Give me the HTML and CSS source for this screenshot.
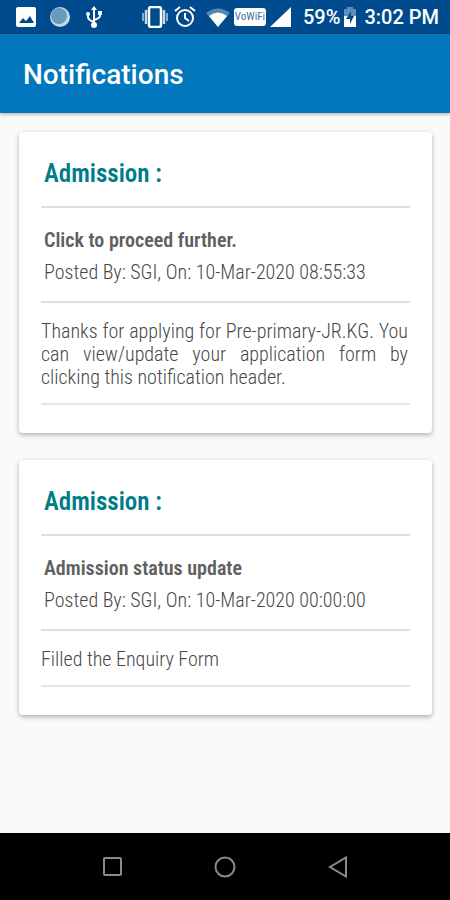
FILE: index.html
```html
<!DOCTYPE html>
<html lang="en">
<head>
<meta charset="utf-8">
<meta name="viewport" content="width=device-width, initial-scale=1">
<title>Notifications</title>
<link rel="stylesheet" href="styles.css">
</head>
<body>
<div class="status-bar">
  <div class="status-group status-left">
    <svg width="20" height="20" viewBox="0 0 20 20"><rect width="20" height="20" rx="2" fill="#fff"/><path d="M3 16l4-5 3 3 4-5 4 7z" fill="#004b8d"/></svg>
    <svg width="20" height="20" viewBox="0 0 20 20"><circle cx="10" cy="10" r="10" fill="#c5d8e8"/><circle cx="9" cy="9" r="8" fill="#6b9abf"/></svg>
    <svg class="usb" width="16" height="22" viewBox="0 0 16 22" fill="none" stroke="#fff" stroke-width="2"><path d="M8 3v16M2 8v3q0 3 6 5M14 7v3q0 2-6 4"/><path d="M8 0l3 4H5z" fill="#fff" stroke="none"/><circle cx="8" cy="19" r="3" fill="#fff" stroke="none"/><circle cx="2" cy="8" r="2" fill="#fff" stroke="none"/><path d="M12 5h4v4h-4z" fill="#fff" stroke="none"/></svg>
  </div>
  <div class="status-group status-right">
    <svg class="vibrate" width="26" height="22" viewBox="0 0 26 22" fill="none"><rect x="7" y="1" width="12" height="20" rx="2" stroke="#fff" stroke-width="2.5"/><path d="M4 4v14M22 4v14" stroke="#c5d8e8" stroke-width="2.5"/><path d="M1 7v8M25 7v8" stroke="#89abc9" stroke-width="2"/></svg>
    <svg class="alarm" width="22" height="22" viewBox="0 0 22 22" fill="none" stroke="#fff" stroke-width="2"><circle cx="11" cy="12" r="8"/><path d="M11 7v5l4 3M1 5l5-4M21 5l-5-4"/></svg>
    <svg width="24" height="19" viewBox="0 0 24 19"><path d="M0 5Q12-4 24 5L12 19z" fill="#5587b3"/><path d="M3 8q9-7 18 0l-9 11z" fill="#fff"/></svg>
    <span class="vowifi">VoWiFi</span>
    <svg width="21" height="20" viewBox="0 0 21 20"><path d="M21 0v20H0z" fill="#fff"/></svg>
    <span class="status-text battery-level">59%</span>
    <svg width="12" height="20" viewBox="0 0 12 20"><path d="M3 2V0h6v2h3v8H0V2z" fill="#5f8db7"/><path d="M0 9h12v11H0z" fill="#fff"/><path d="M7 4L2 12h4v5l4-8H7z" fill="#004b8d"/></svg>
    <span class="status-text clock">3:02 PM</span>
  </div>
</div>
<header class="app-bar"><h1>Notifications</h1></header>
<main class="list">
  <article class="card">
    <h2>Admission :</h2>
    <div class="summary">
      <h3>Click to proceed further.</h3>
      <p>Posted By: SGI, On: 10-Mar-2020 08:55:33</p>
    </div>
    <p class="message">Thanks for applying for Pre-primary-JR.KG. You can view/update your application form by clicking this notification header.</p>
  </article>
  <article class="card">
    <h2>Admission :</h2>
    <div class="summary">
      <h3>Admission status update</h3>
      <p>Posted By: SGI, On: 10-Mar-2020 00:00:00</p>
    </div>
    <p class="message">Filled the Enquiry Form</p>
  </article>
</main>
<nav class="nav-bar">
  <button aria-label="Recent apps"><svg width="22" height="22" viewBox="0 0 22 22"><rect x="3" y="2" width="17" height="17" rx="1"/></svg></button>
  <button aria-label="Home"><svg width="22" height="22" viewBox="0 0 22 22"><circle cx="11" cy="11" r="9.5"/></svg></button>
  <button aria-label="Back"><svg width="22" height="22" viewBox="0 0 22 22"><path d="M19 1.5v19L3 11z"/></svg></button>
</nav>
</body>
</html>
```
FILE: styles.css
```css
* {
  box-sizing: border-box;
}

body {
  margin: 0;
  min-height: 100vh;
  display: flex;
  flex-direction: column;
  background: #fafafa;
  font-family: Roboto, sans-serif;
}

h1, h2, h3, p {
  margin: 0;
}

svg {
  display: block;
  flex: none;
}

.status-bar {
  height: 34px;
  padding: 0 11px 0 16px;
  display: flex;
  align-items: center;
  justify-content: space-between;
  background: #004b8d;
  color: #fff;
}

.status-group {
  display: flex;
  align-items: center;
}

.status-left {
  gap: 14px;
}

.usb {
  margin-left: 2px;
}

.status-right {
  gap: 4px;
}

.vibrate {
  margin-right: 2px;
}

.alarm {
  margin-right: 6px;
}

.vowifi {
  height: 18px;
  width: 32px;
  border-radius: 3px;
  background: #fff;
  color: #3c6ea3;
  font: 11px/18px "Roboto Condensed", "Liberation Sans Narrow", Roboto, sans-serif;
  text-align: center;
}

.status-text {
  font-size: 20px;
  font-weight: 500;
  line-height: 24px;
  white-space: nowrap;
}

.battery-level {
  margin-left: 8px;
}

.clock {
  margin-left: 4px;
}

.app-bar {
  padding: 21px 23px 18px;
  background: #0277bd;
  color: #fff;
  box-shadow: 0 1px 4px rgba(0, 0, 0, 0.35);
}

.app-bar h1 {
  font-size: 28px;
  font-weight: 500;
  line-height: 40px;
}

.list {
  flex: 1;
  padding: 19px 18px 27px 19px;
  display: flex;
  flex-direction: column;
  gap: 27px;
  font-family: "Roboto Condensed", "Liberation Sans Narrow", Roboto, sans-serif;
  font-size: 20px;
  font-weight: 300;
  color: #484848;
}

.card {
  padding: 0 22px 28px;
  border-radius: 4px;
  background: #fff;
  box-shadow: 0 2px 5px rgba(0, 0, 0, 0.3);
}

.card h2 {
  padding: 26px 3px 16px;
  border-bottom: 2px solid #dedede;
  color: #007c89;
  font-size: 25px;
  font-weight: 600;
  line-height: 32px;
}

.summary {
  padding: 16px 3px 13px;
  border-bottom: 2px solid #dedede;
  line-height: 32px;
}

.summary h3 {
  color: #606060;
  font-size: 20px;
  font-weight: 600;
}

.message {
  padding: 17px 2px 14px 0;
  border-bottom: 2px solid #e6e6e6;
  line-height: 23px;
  text-align: justify;
}

.nav-bar {
  height: 67px;
  padding: 0 56px;
  display: flex;
  align-items: center;
  justify-content: space-around;
  background: #000;
}

.nav-bar button {
  padding: 0;
  border: 0;
  background: none;
}

.nav-bar svg {
  fill: none;
  stroke: #8a8a8a;
  stroke-width: 2;
}
```
